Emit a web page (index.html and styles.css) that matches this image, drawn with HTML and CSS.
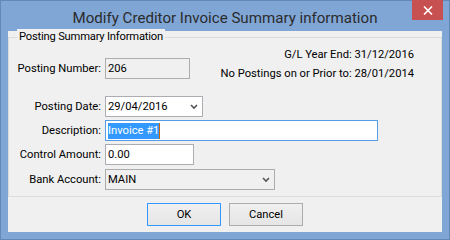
FILE: index.html
```html
<!DOCTYPE html>
<html>
<head>
<meta charset="utf-8">
<link rel="stylesheet" href="styles.css">
</head>
<body>
<div class="window">
  <div class="titlebar">
    <div class="title">Modify Creditor Invoice Summary information</div>
    <div class="close"><svg width="10" height="9" viewBox="0 0 10 9"><path d="M1 0.5 L9 8.5 M9 0.5 L1 8.5" stroke="#fff" stroke-width="1.6"/></svg></div>
  </div>
  <div class="client">
    <div class="group">
      <div class="legend">Posting Summary Information</div>
      <div class="top">
        <div class="row r-number">
          <div class="label">Posting Number:</div>
          <div class="box disabled w-number">206</div>
        </div>
        <div class="info">
          <div>G/L Year End: 31/12/2016</div>
          <div>No Postings on or Prior to: 28/01/2014</div>
        </div>
      </div>
      <div class="row r-date">
        <div class="label">Posting Date:</div>
        <div class="box combo w-date"><span>29/04/2016</span><svg class="chev" width="8" height="6" viewBox="0 0 8 6"><path d="M1 1 L4 4 L7 1" fill="none" stroke="#555" stroke-width="1.6"/></svg></div>
      </div>
      <div class="row r-desc">
        <div class="label">Description:</div>
        <div class="box focus w-desc"><span class="sel">Invoice #1</span><span class="caret"></span></div>
      </div>
      <div class="row r-ctrl">
        <div class="label">Control Amount:</div>
        <div class="box w-ctrl">0.00</div>
      </div>
      <div class="row r-bank">
        <div class="label">Bank Account:</div>
        <div class="box combo grayc w-bank"><span>MAIN</span><svg class="chev" width="8" height="6" viewBox="0 0 8 6"><path d="M1 1 L4 4 L7 1" fill="none" stroke="#555" stroke-width="1.6"/></svg></div>
      </div>
    </div>
    <div class="buttons">
      <div class="btn default">OK</div>
      <div class="btn">Cancel</div>
    </div>
  </div>
</div>
</body>
</html>
```
FILE: styles.css
```css
html, body {
  margin: 0;
  padding: 0;
}
body {
  width: 450px;
  height: 240px;
  overflow: hidden;
  font-family: Roboto, "Open Sans", sans-serif;
  font-size: 11.2px;
  color: #000;
}
.window {
  width: 450px;
  height: 240px;
  box-sizing: border-box;
  background: #80a6d6;
  border: 1px solid #6489b8;
  position: relative;
  display: flex;
  flex-direction: column;
}
.titlebar {
  height: 30px;
  display: flex;
  align-items: center;
  justify-content: center;
}
.title {
  font-size: 15.1px;
  color: #2b2b2b;
  margin-top: 3px;
}
.close {
  position: absolute;
  top: -1px;
  right: 6px;
  width: 31px;
  height: 20px;
  background: #c75050;
  display: flex;
  align-items: center;
  justify-content: center;
}
.client {
  margin: 0 7px 0 7px;
  height: 201px;
  background: #f0f0f0;
  border: 0;
  display: flex;
  flex-direction: column;
}
.group {
  margin-top: 6px;
  height: 158px;
  border: 1px solid #dcdcdc;
  position: relative;
  display: flex;
  flex-direction: column;
}
.legend {
  position: absolute;
  top: -9px;
  left: 8px;
  padding: 0 2px;
  background: #f0f0f0;
  line-height: 16px;
  letter-spacing: -0.2px;
}
.top {
  display: flex;
  justify-content: space-between;
}
.info {
  text-align: right;
  padding-right: 27px;
  padding-top: 7px;
  line-height: 19px;
}
.row {
  display: flex;
  align-items: center;
}
.label {
  width: 92px;
  text-align: right;
  margin-right: 4px;
}
.box {
  box-sizing: border-box;
  height: 21px;
  border: 1px solid #abadb3;
  background: #fff;
  padding-left: 2px;
  display: flex;
  align-items: center;
}
.disabled {
  background: #f0f0f0;
  border-color: #adadad;
}
.grayc {
  background: #f0f0f0;
  border-color: #acacac;
}
.combo {
  justify-content: space-between;
  padding-right: 4px;
}
.focus {
  border-color: #569de5;
}
.sel {
  background: #3399ff;
  color: #fff;
  line-height: 16px;
}
.caret {
  width: 1px;
  height: 16px;
  background: #cc6600;
}
.r-number { margin-top: 16px; }
.r-date { margin-top: 13px; }
.r-desc { margin-top: 3px; }
.r-ctrl { margin-top: 3px; }
.r-bank { margin-top: 4px; }
.w-number { width: 85px; }
.w-date { width: 98px; }
.w-desc { width: 273px; }
.w-ctrl { width: 89px; }
.w-bank { width: 170px; }
.buttons {
  margin-top: 6px;
  display: flex;
  justify-content: center;
  gap: 8px;
}
.btn {
  box-sizing: border-box;
  width: 74px;
  height: 23px;
  border: 1px solid #acacac;
  background: linear-gradient(#f0f0f0, #e5e5e5);
  display: flex;
  align-items: center;
  justify-content: center;
}
.btn.default {
  border-color: #3399ff;
}
```
